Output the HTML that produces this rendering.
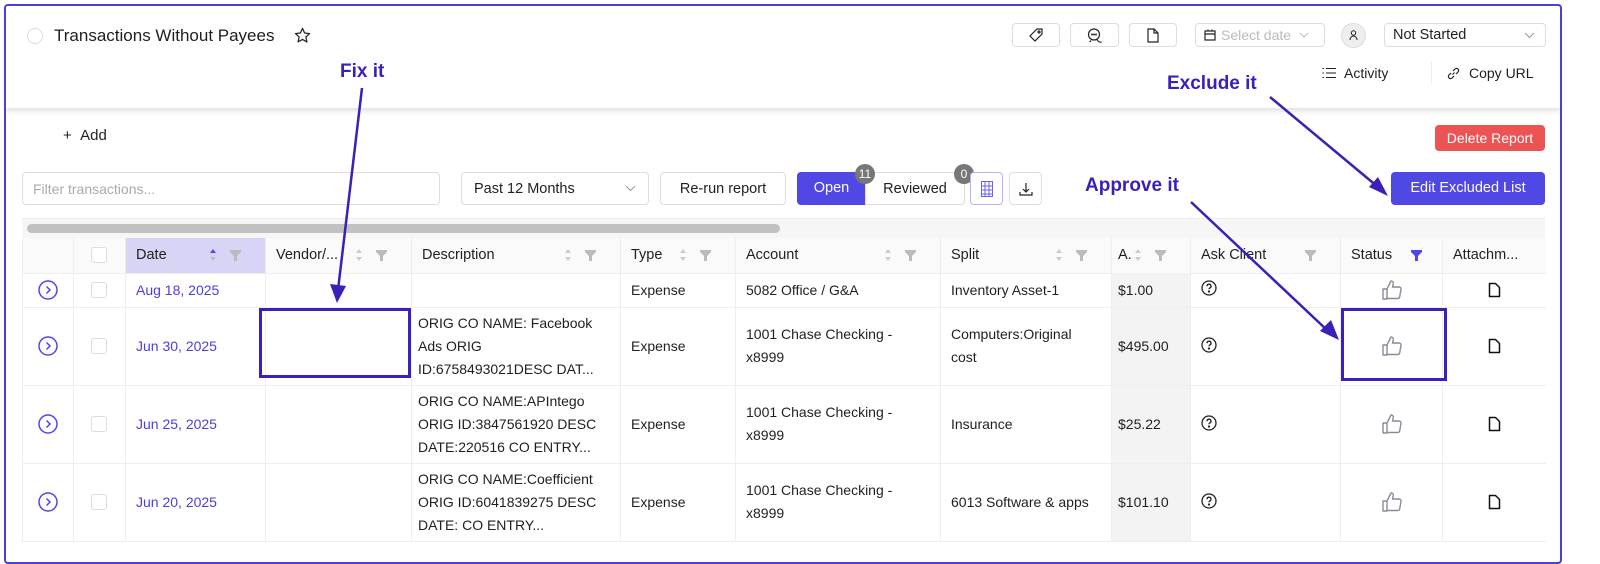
<!DOCTYPE html>
<html><head><meta charset="utf-8"><style>
*{box-sizing:border-box;margin:0;padding:0}
body{width:1600px;height:552px;background:#fff;font-family:"Liberation Sans",sans-serif;color:#1f1f1f;position:relative;overflow:hidden;font-size:14px}
.abs{position:absolute}
.frame{left:4px;top:4px;width:1558px;height:560px;border:2px solid #4a3fd6;border-radius:4px}
.hdr{left:6px;top:6px;width:1554px;height:102px;background:#fff;box-shadow:0 3px 5px rgba(0,0,0,.12)}
.btn{position:absolute;border:1px solid #ddd;border-radius:4px;background:#fff;display:flex;align-items:center;justify-content:center}
.ann{color:#3a1fb8;font-weight:bold;font-size:19px;position:absolute}
table{border-collapse:collapse;position:absolute;left:22px;top:238px;table-layout:fixed;width:1523px}
td,th{border-left:1px solid #eee;border-bottom:1px solid #eee;font-weight:normal;text-align:left;padding:0 10px;font-size:14px;vertical-align:middle;overflow:hidden}
th{height:35px;background:#fafafa;font-size:14.5px;white-space:nowrap}
th .w{display:flex;align-items:center}
th .w span{flex:1}
th svg{margin-left:6px}
.lnk{color:#4a40d8}
.desc{line-height:23px;font-size:14px}
.ic{display:block;margin:0 auto}
</style></head><body>
<div class="abs hdr"></div>
<div class="abs frame"></div>
<div class="abs" style="left:27px;top:28px;width:16px;height:16px;border:1px solid #ddd;border-radius:50%"></div>
<div class="abs" style="left:54px;top:26px;font-size:17px">Transactions Without Payees</div>
<svg class="abs" style="left:294px;top:27px" width="17" height="17" viewBox="0 0 24 24" fill="none" stroke="#222" stroke-width="1.8" stroke-linejoin="round"><path d="M12 2l3 6.5 7 .8-5.2 4.8 1.4 7L12 17.6 5.8 21l1.4-7L2 9.3l7-.8z"/></svg>
<div class="btn" style="left:1012px;top:23px;width:48px;height:24px"><svg width="14" height="14" viewBox="0 0 14 14" fill="none" stroke="#222" stroke-width="1.2"><path d="M8 1h5v5L6 13 1 8z"/><circle cx="10" cy="4" r="1"/></svg></div>
<div class="btn" style="left:1070px;top:23px;width:49px;height:24px"><svg width="16" height="15" viewBox="0 0 16 15" fill="none" stroke="#222" stroke-width="1.2"><circle cx="7" cy="6.5" r="5.5"/><path d="M4 12.5l-1.5 1.5M10 11.5a4 4 0 0 0 4.5 2.5"/><circle cx="5" cy="6.5" r=".4" fill="#222"/><circle cx="7" cy="6.5" r=".4" fill="#222"/><circle cx="9" cy="6.5" r=".4" fill="#222"/></svg></div>
<div class="btn" style="left:1129px;top:23px;width:48px;height:24px"><svg width="12" height="15" viewBox="0 0 12 15" fill="none" stroke="#222" stroke-width="1.2"><path d="M1 1h6l4 4v9H1z"/><path d="M7 1v4h4"/></svg></div>
<div class="btn" style="left:1195px;top:23px;width:130px;height:24px;justify-content:flex-start;padding-left:8px;color:#bbb;font-size:14px"><svg width="12" height="12" viewBox="0 0 12 12" fill="none" stroke="#222" stroke-width="1.2" style="margin-right:5px"><rect x="1" y="2" width="10" height="9"/><path d="M1 5h10M4 0.5v2M8 0.5v2"/></svg>Select date<svg width="10" height="6" viewBox="0 0 10 6" fill="none" stroke="#bbb" style="margin-left:8px"><path d="M1 1l4 4 4-4"/></svg></div>
<div class="abs" style="left:1341px;top:23px;width:25px;height:25px;border-radius:50%;background:#eee;border:1px solid #ddd"><svg width="23" height="23" viewBox="0 0 23 23" fill="none" stroke="#222" stroke-width="1"><circle cx="11.5" cy="9" r="2.2"/><path d="M8 16a3.5 4 0 0 1 7 0"/></svg></div>
<div class="btn" style="left:1384px;top:23px;width:162px;height:24px;justify-content:space-between;padding:0 10px 0 8px;font-size:14.5px"><span>Not Started</span><svg width="11" height="7" viewBox="0 0 11 7" fill="none" stroke="#999"><path d="M1 1l4.5 4.5L10 1"/></svg></div>
<svg class="abs" style="left:1322px;top:67px" width="14" height="12" viewBox="0 0 14 12" fill="none" stroke="#222" stroke-width="1.1"><path d="M4 1.5h10M4 6h10M4 10.5h10M0.5 1.5h1.5M0.5 6h1.5M0.5 10.5h1.5"/></svg>
<div class="abs" style="left:1344px;top:65px;font-size:14px">Activity</div>
<div class="abs" style="left:1431px;top:62px;width:1px;height:22px;background:#eee"></div>
<svg class="abs" style="left:1447px;top:67px" width="13" height="13" viewBox="0 0 13 13" fill="none" stroke="#222" stroke-width="1.2"><path d="M5.5 7.5L7.5 5.5M4 6L2 8a2 2 0 0 0 3 3l2-2M9 7l2-2a2 2 0 0 0-3-3L6 4"/></svg>
<div class="abs" style="left:1469px;top:65px;font-size:14px">Copy URL</div>

<div class="abs" style="left:63px;top:127px;font-size:15px">+&nbsp;&nbsp;Add</div>
<div class="abs" style="left:1435px;top:125px;width:110px;height:26px;background:#ec5453;color:#fff;border-radius:4px;text-align:center;line-height:26px;font-size:14px">Delete Report</div>

<div class="btn" style="left:22px;top:172px;width:418px;height:33px;justify-content:flex-start;padding-left:10px;color:#aaa;font-size:14px">Filter transactions...</div>
<div class="btn" style="left:461px;top:172px;width:188px;height:33px;justify-content:space-between;padding:0 12px 0 12px;font-size:14.5px"><span>Past 12 Months</span><svg width="11" height="7" viewBox="0 0 11 7" fill="none" stroke="#999"><path d="M1 1l4.5 4.5L10 1"/></svg></div>
<div class="btn" style="left:660px;top:172px;width:126px;height:33px;font-size:14.5px">Re-run report</div>
<div class="abs" style="left:797px;top:172px;width:69px;height:33px;background:#5048e5;color:#fff;border-radius:4px 0 0 4px;text-align:center;line-height:33px;font-size:14.5px">Open</div>
<div class="btn" style="left:865px;top:172px;width:100px;height:33px;border-radius:0 4px 4px 0;font-size:14.5px">Reviewed</div>
<div class="abs" style="left:855px;top:164px;width:20px;height:20px;border-radius:50%;background:#777;color:#fff;font-size:12px;text-align:center;line-height:20px">11</div>
<div class="abs" style="left:954px;top:164px;width:20px;height:20px;border-radius:50%;background:#777;color:#fff;font-size:12px;text-align:center;line-height:20px">0</div>
<div class="btn" style="left:970px;top:172px;width:33px;height:33px;border-color:#b9b4f3"><svg width="12" height="16" viewBox="0 0 12 16" fill="none" stroke="#6a62e8"><rect x=".5" y=".5" width="11" height="15"/><path d="M4 1v14M8 1v14M1 5h10M1 9h10M1 13h10"/></svg></div>
<div class="btn" style="left:1009px;top:172px;width:33px;height:33px"><svg width="14" height="14" viewBox="0 0 14 14" fill="none" stroke="#222" stroke-width="1.2"><path d="M7 1v9M4 7l3 3 3-3M1 10v3h12v-3"/></svg></div>
<div class="abs" style="left:1391px;top:172px;width:154px;height:33px;background:#5048e5;color:#fff;border-radius:4px;text-align:center;line-height:33px;font-size:14.5px">Edit Excluded List</div>

<div class="abs" style="left:22px;top:218px;width:1523px;height:20px;background:#f6f6f6;border-top:1px solid #eee"></div>
<div class="abs" style="left:27px;top:224px;width:753px;height:9px;background:#c1c1c1;border-radius:5px"></div>

<table>
<colgroup><col style="width:51px"><col style="width:52px"><col style="width:140px"><col style="width:146px"><col style="width:209px"><col style="width:115px"><col style="width:205px"><col style="width:171px"><col style="width:79px"><col style="width:150px"><col style="width:102px"><col style="width:103px"></colgroup>
<tr><th></th><th><div style="width:16px;height:16px;border:1px solid #ddd;border-radius:3px;background:#fff;margin-left:7px"></div></th>
<th style="background:#d7d4f6;padding-right:24px"><div class="w"><span>Date</span><svg width="8" height="14" viewBox="0 0 8 14"><path d="M4 1L7 5H1z" fill="#5048e5"/><path d="M4 13L7 9H1z" fill="#bbb"/></svg><svg width="11" height="11" viewBox="0 0 11 11" style="margin-left:13px"><path d="M0 0h11v2L7 6v5H4V6L0 2z" fill="#bbb"/></svg></div></th>
<th style="padding-right:24px"><div class="w"><span>Vendor/...</span><svg width="8" height="14" viewBox="0 0 8 14"><path d="M4 1L7 5H1zM4 13L7 9H1z" fill="#ccc"/></svg><svg width="11" height="11" viewBox="0 0 11 11" style="margin-left:13px"><path d="M0 0h11v2L7 6v5H4V6L0 2z" fill="#bbb"/></svg></div></th>
<th style="padding-right:24px"><div class="w"><span>Description</span><svg width="8" height="14" viewBox="0 0 8 14"><path d="M4 1L7 5H1zM4 13L7 9H1z" fill="#ccc"/></svg><svg width="11" height="11" viewBox="0 0 11 11" style="margin-left:13px"><path d="M0 0h11v2L7 6v5H4V6L0 2z" fill="#bbb"/></svg></div></th>
<th style="padding-right:24px"><div class="w"><span>Type</span><svg width="8" height="14" viewBox="0 0 8 14"><path d="M4 1L7 5H1zM4 13L7 9H1z" fill="#ccc"/></svg><svg width="11" height="11" viewBox="0 0 11 11" style="margin-left:13px"><path d="M0 0h11v2L7 6v5H4V6L0 2z" fill="#bbb"/></svg></div></th>
<th style="padding-right:24px"><div class="w"><span>Account</span><svg width="8" height="14" viewBox="0 0 8 14"><path d="M4 1L7 5H1zM4 13L7 9H1z" fill="#ccc"/></svg><svg width="11" height="11" viewBox="0 0 11 11" style="margin-left:13px"><path d="M0 0h11v2L7 6v5H4V6L0 2z" fill="#bbb"/></svg></div></th>
<th style="padding-right:24px"><div class="w"><span>Split</span><svg width="8" height="14" viewBox="0 0 8 14"><path d="M4 1L7 5H1zM4 13L7 9H1z" fill="#ccc"/></svg><svg width="11" height="11" viewBox="0 0 11 11" style="margin-left:13px"><path d="M0 0h11v2L7 6v5H4V6L0 2z" fill="#bbb"/></svg></div></th>
<th style="padding:0 24px 0 6px"><div class="w"><span>A.</span><svg width="8" height="14" viewBox="0 0 8 14" style="margin-left:0"><path d="M4 1L7 5H1zM4 13L7 9H1z" fill="#ccc"/></svg><svg width="11" height="11" viewBox="0 0 11 11" style="margin-left:13px"><path d="M0 0h11v2L7 6v5H4V6L0 2z" fill="#bbb"/></svg></div></th>
<th style="padding-right:24px"><div class="w"><span>Ask Client</span><svg width="11" height="11" viewBox="0 0 11 11"><path d="M0 0h11v2L7 6v5H4V6L0 2z" fill="#bbb"/></svg></div></th>
<th style="padding-right:20px"><div class="w"><span>Status</span><svg width="11" height="11" viewBox="0 0 11 11"><path d="M0 0h11v2L7 6v5H4V6L0 2z" fill="#5048e5"/></svg></div></th>
<th>Attachm...</th></tr>
</table>
<table style="top:273px">
<colgroup><col style="width:51px"><col style="width:52px"><col style="width:140px"><col style="width:146px"><col style="width:209px"><col style="width:115px"><col style="width:205px"><col style="width:171px"><col style="width:79px"><col style="width:150px"><col style="width:102px"><col style="width:103px"></colgroup>
<tr style="height:34px"><td><svg class="ic" width="20" height="20" viewBox="0 0 20 20" fill="none" stroke="#5048e5" stroke-width="1.5"><circle cx="10" cy="10" r="9"/><path d="M8.5 6.5L12 10l-3.5 3.5"/></svg></td><td><div style="width:16px;height:16px;border:1px solid #ddd;border-radius:3px;margin-left:7px"></div></td><td class="lnk">Aug 18, 2025</td><td></td><td></td><td>Expense</td><td>5082 Office / G&amp;A</td><td>Inventory Asset-1</td><td style="background:#f3f3f3;padding:0 6px">$1.00</td><td><svg width="16" height="16" viewBox="0 0 16 16" fill="none" stroke="#222" stroke-width="1.3"><circle cx="8" cy="8" r="7"/><path d="M6 6.2a2 2 0 1 1 2.6 1.9c-.5.2-.6.6-.6 1.2"/><circle cx="8" cy="11.5" r=".5" fill="#222"/></svg></td><td><svg class="ic" width="22" height="22" viewBox="0 0 22 22" fill="none" stroke="#8a8a9a" stroke-width="1.4" stroke-linejoin="round"><path d="M2 10h4v10H2zM6 10l4-8c1.5 0 2.5 1 2.3 2.5L11.5 8H18a2 2 0 0 1 2 2.3l-1.3 7.5a2 2 0 0 1-2 1.7H6"/></svg></td><td><svg class="ic" width="13" height="16" viewBox="0 0 13 16" fill="none" stroke="#111" stroke-width="1.5" stroke-linejoin="round"><path d="M1.5 1.5h6l4 4v9h-10z"/></svg></td></tr>
<tr style="height:78px"><td><svg class="ic" width="20" height="20" viewBox="0 0 20 20" fill="none" stroke="#5048e5" stroke-width="1.5"><circle cx="10" cy="10" r="9"/><path d="M8.5 6.5L12 10l-3.5 3.5"/></svg></td><td><div style="width:16px;height:16px;border:1px solid #ddd;border-radius:3px;margin-left:7px"></div></td><td class="lnk">Jun 30, 2025</td><td></td><td class="desc" style="padding:0 6px">ORIG CO NAME: Facebook<br>Ads ORIG<br>ID:6758493021DESC DAT...</td><td>Expense</td><td style="line-height:23px">1001 Chase Checking - x8999</td><td style="line-height:23px">Computers:Original cost</td><td style="background:#f3f3f3;padding:0 6px">$495.00</td><td><svg width="16" height="16" viewBox="0 0 16 16" fill="none" stroke="#222" stroke-width="1.3"><circle cx="8" cy="8" r="7"/><path d="M6 6.2a2 2 0 1 1 2.6 1.9c-.5.2-.6.6-.6 1.2"/><circle cx="8" cy="11.5" r=".5" fill="#222"/></svg></td><td><svg class="ic" width="22" height="22" viewBox="0 0 22 22" fill="none" stroke="#8a8a9a" stroke-width="1.4" stroke-linejoin="round"><path d="M2 10h4v10H2zM6 10l4-8c1.5 0 2.5 1 2.3 2.5L11.5 8H18a2 2 0 0 1 2 2.3l-1.3 7.5a2 2 0 0 1-2 1.7H6"/></svg></td><td><svg class="ic" width="13" height="16" viewBox="0 0 13 16" fill="none" stroke="#111" stroke-width="1.5" stroke-linejoin="round"><path d="M1.5 1.5h6l4 4v9h-10z"/></svg></td></tr>
<tr style="height:78px"><td><svg class="ic" width="20" height="20" viewBox="0 0 20 20" fill="none" stroke="#5048e5" stroke-width="1.5"><circle cx="10" cy="10" r="9"/><path d="M8.5 6.5L12 10l-3.5 3.5"/></svg></td><td><div style="width:16px;height:16px;border:1px solid #ddd;border-radius:3px;margin-left:7px"></div></td><td class="lnk">Jun 25, 2025</td><td></td><td class="desc" style="padding:0 6px">ORIG CO NAME:APIntego<br>ORIG ID:3847561920 DESC<br>DATE:220516 CO ENTRY...</td><td>Expense</td><td style="line-height:23px">1001 Chase Checking - x8999</td><td>Insurance</td><td style="background:#f3f3f3;padding:0 6px">$25.22</td><td><svg width="16" height="16" viewBox="0 0 16 16" fill="none" stroke="#222" stroke-width="1.3"><circle cx="8" cy="8" r="7"/><path d="M6 6.2a2 2 0 1 1 2.6 1.9c-.5.2-.6.6-.6 1.2"/><circle cx="8" cy="11.5" r=".5" fill="#222"/></svg></td><td><svg class="ic" width="22" height="22" viewBox="0 0 22 22" fill="none" stroke="#8a8a9a" stroke-width="1.4" stroke-linejoin="round"><path d="M2 10h4v10H2zM6 10l4-8c1.5 0 2.5 1 2.3 2.5L11.5 8H18a2 2 0 0 1 2 2.3l-1.3 7.5a2 2 0 0 1-2 1.7H6"/></svg></td><td><svg class="ic" width="13" height="16" viewBox="0 0 13 16" fill="none" stroke="#111" stroke-width="1.5" stroke-linejoin="round"><path d="M1.5 1.5h6l4 4v9h-10z"/></svg></td></tr>
<tr style="height:78px"><td><svg class="ic" width="20" height="20" viewBox="0 0 20 20" fill="none" stroke="#5048e5" stroke-width="1.5"><circle cx="10" cy="10" r="9"/><path d="M8.5 6.5L12 10l-3.5 3.5"/></svg></td><td><div style="width:16px;height:16px;border:1px solid #ddd;border-radius:3px;margin-left:7px"></div></td><td class="lnk">Jun 20, 2025</td><td></td><td class="desc" style="padding:0 6px">ORIG CO NAME:Coefficient<br>ORIG ID:6041839275 DESC<br>DATE: CO ENTRY...</td><td>Expense</td><td style="line-height:23px">1001 Chase Checking - x8999</td><td>6013 Software &amp; apps</td><td style="background:#f3f3f3;padding:0 6px">$101.10</td><td><svg width="16" height="16" viewBox="0 0 16 16" fill="none" stroke="#222" stroke-width="1.3"><circle cx="8" cy="8" r="7"/><path d="M6 6.2a2 2 0 1 1 2.6 1.9c-.5.2-.6.6-.6 1.2"/><circle cx="8" cy="11.5" r=".5" fill="#222"/></svg></td><td><svg class="ic" width="22" height="22" viewBox="0 0 22 22" fill="none" stroke="#8a8a9a" stroke-width="1.4" stroke-linejoin="round"><path d="M2 10h4v10H2zM6 10l4-8c1.5 0 2.5 1 2.3 2.5L11.5 8H18a2 2 0 0 1 2 2.3l-1.3 7.5a2 2 0 0 1-2 1.7H6"/></svg></td><td><svg class="ic" width="13" height="16" viewBox="0 0 13 16" fill="none" stroke="#111" stroke-width="1.5" stroke-linejoin="round"><path d="M1.5 1.5h6l4 4v9h-10z"/></svg></td></tr>
</table>

<div class="abs" style="left:259px;top:308px;width:152px;height:70px;border:3px solid #3a1fb8"></div>
<div class="abs" style="left:1341px;top:308px;width:106px;height:73px;border:3px solid #3a1fb8"></div>
<div class="ann" style="left:340px;top:61px">Fix it</div>
<div class="ann" style="left:1167px;top:73px">Exclude it</div>
<div class="ann" style="left:1085px;top:175px">Approve it</div>
<svg class="abs" style="left:0;top:0" width="1600" height="552">
<g stroke="#3a1fb8" stroke-width="2.5" fill="none">
<path d="M362 88L338 290"/><path d="M1270 97L1378 187"/><path d="M1191 202L1328 331"/></g>
<path d="M330 284L346 286L337 303z" fill="#3a1fb8"/>
<path d="M1369 187L1388 196L1378 177z" fill="#3a1fb8"/>
<path d="M1320 331L1339 340L1331 320z" fill="#3a1fb8"/>
</svg>
</body></html>
